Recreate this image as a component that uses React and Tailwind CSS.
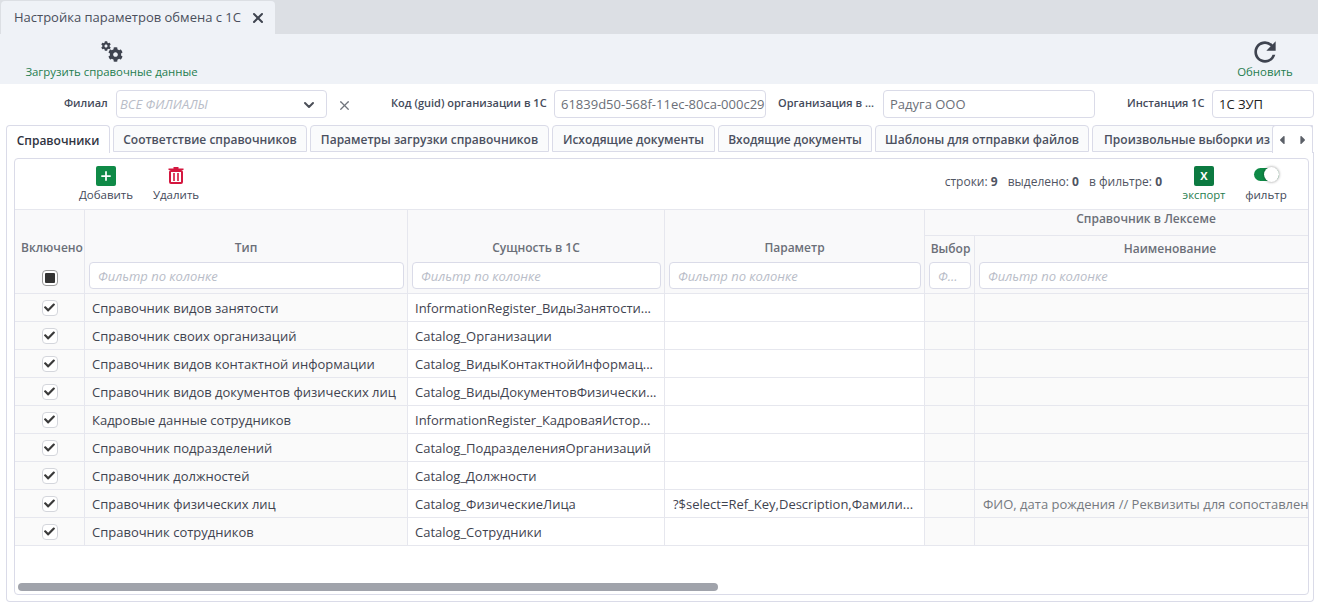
import React from "react";
import { X, ChevronDown, Plus } from "lucide-react";
import { MdRefresh } from "react-icons/md";
import { FaCog, FaCaretLeft, FaCaretRight, FaCheck } from "react-icons/fa";

const tabs = [
  ["Соответствие справочников", "w-[194px]"],
  ["Параметры загрузки справочников", "w-[239px]"],
  ["Исходящие документы", "w-[163px]"],
  ["Входящие документы", "w-[154px]"],
  ["Шаблоны для отправки файлов", "w-[214px]"],
];

const rows = [
  ["Справочник видов занятости", "InformationRegister_ВидыЗанятости...", "", ""],
  ["Справочник своих организаций", "Catalog_Организации", "", ""],
  ["Справочник видов контактной информации", "Catalog_ВидыКонтактнойИнформац...", "", ""],
  ["Справочник видов документов физических лиц", "Catalog_ВидыДокументовФизически...", "", ""],
  ["Кадровые данные сотрудников", "InformationRegister_КадроваяИстор...", "", ""],
  ["Справочник подразделений", "Catalog_ПодразделенияОрганизаций", "", ""],
  ["Справочник должностей", "Catalog_Должности", "", ""],
  ["Справочник физических лиц", "Catalog_ФизическиеЛица", "?$select=Ref_Key,Description,Фамили...", "ФИО, дата рождения // Реквизиты для сопоставления"],
  ["Справочник сотрудников", "Catalog_Сотрудники", "", ""],
];

function FilterInput({ text = "Фильтр по колонке", className = "" }) {
  return (
    <div className={`h-[27px] pt-[2px] bg-white border border-[#dadbe8] rounded-[4px] pl-2 flex items-center italic font-normal text-[13px] text-[#b9bdc8] overflow-hidden whitespace-nowrap ${className}`}>
      {text}
    </div>
  );
}

function Check() {
  return (
    <div className="w-[16px] h-[16px] mx-auto bg-white border border-[#d4d6dc] rounded-[4px] flex items-center justify-center text-[#3a3a3a]">
      <FaCheck size={11} />
    </div>
  );
}

const cellBase = "border-r border-[#e6e7ee] bg-[#f9f9fa] text-center p-0";
const th = `${cellBase} border-b font-semibold text-[12px] text-[#6b6f78]`;
const thTall = `${cellBase} font-semibold text-[12px] text-[#6b6f78] align-bottom pb-[5px]`;

function TrashIcon() {
  return (
    <svg width="16" height="18" viewBox="0 0 16 18" className="text-[#d4173f]">
      <path d="M5.5 1h5v1.5h5V4H.5V2.500h5z" fill="currentColor" />
      <rect x="2" y="5" width="12" height="12" rx="1" fill="none" stroke="currentColor" strokeWidth="2" />
      <rect x="5.2" y="7" width="1.600" height="8" fill="currentColor" />
      <rect x="9.2" y="7" width="1.600" height="8" fill="currentColor" />
    </svg>
  );
}

export default function App() {
  return (
    <div className="w-[1318px] h-[607px] overflow-hidden bg-white text-[#3c4152] text-[13px] flex flex-col" style={{ fontFamily: '"Open Sans", "Noto Sans", sans-serif' }}>
      {/* window tab strip */}
      <div className="h-[34px] bg-[#dcdfe4] flex items-end shrink-0">
        <div className="w-[274px] h-[33px] ml-px bg-[#eff2f7] rounded-t-[4px] flex items-center pl-[13px] text-[13px] text-[#4a4f5c] whitespace-nowrap">
          <span>Настройка параметров обмена с 1С</span>
          <X size={16} strokeWidth={3} className="ml-[9px] shrink-0 text-[#3f4450]" />
        </div>
      </div>

      {/* toolbar */}
      <div className="h-[50px] bg-[#eff2f7] flex justify-between items-start shrink-0 font-medium text-[11.4px] text-[#1f7d4f]">
        <div className="ml-[25px] w-[173px] flex flex-col items-center">
          <div className="relative w-[22px] h-[21px] mt-[7px] text-[#3f4450]">
            <FaCog size={10} className="absolute left-0 top-0" />
            <FaCog size={15} className="absolute right-0 bottom-0" />
          </div>
          <span className="mt-[1px] whitespace-nowrap">Загрузить справочные данные</span>
        </div>
        <div className="mr-[25px] w-[56px] flex flex-col items-center">
          <MdRefresh size={32} className="mt-[2px] -mb-[6px] text-[#3f4450]" />
          <span className="mt-[1px]">Обновить</span>
        </div>
      </div>

      {/* filter row */}
      <div className="h-[41px] flex items-start pt-[6px] text-[11px] font-semibold text-[#444a5a] shrink-0">
        <span className="ml-[64px] w-[44px] h-[28px] leading-[26px]">Филиал</span>
        <div className="ml-[8px] w-[211px] h-[28px] border border-[#dadbe8] rounded-[4px] flex items-center justify-between pl-[3px] pr-[9px] pt-[1px] italic text-[13px] font-normal text-[#b9bdc8]">
          <span>ВСЕ ФИЛИАЛЫ</span>
          <ChevronDown size={16} strokeWidth={3} className="text-[#4b4f58]" />
        </div>
        <X size={15} strokeWidth={2} className="ml-[10px] mt-[8px] text-[#70747c]" />
        <span className="ml-[39px] w-[156px] leading-[26px] whitespace-nowrap">Код (guid) организации в 1С</span>
        <div className="ml-[7px] w-[212px] h-[28px] border border-[#dadbe8] rounded-[4px] px-[6px] pt-[1px] flex items-center text-[13px] font-normal text-[#6b6f78] overflow-hidden whitespace-nowrap">
          <span className="w-[204px] shrink-0 overflow-hidden">61839d50-568f-11ec-80ca-000c29</span>
        </div>
        <span className="ml-[12px] w-[96px] leading-[26px] whitespace-nowrap">Организация в ...</span>
        <div className="ml-[9px] w-[212px] h-[28px] border border-[#dadbe8] rounded-[4px] px-[6px] pt-[1px] flex items-center text-[13px] font-normal text-[#6b6f78]">Радуга ООО</div>
        <span className="ml-[32px] w-[78px] leading-[26px] whitespace-nowrap">Инстанция 1С</span>
        <div className="ml-[7px] w-[102px] h-[28px] border border-[#dadbe8] rounded-[4px] px-[6px] pt-[1px] flex items-center text-[13px] font-normal text-[#222]">1С ЗУП</div>
      </div>

      {/* tabs */}
      <div className="h-[27px] ml-[6px] w-[1307px] flex gap-[3px] text-[12px] font-semibold shrink-0 relative">
        <div className="w-[104px] h-[28px] pt-[3px] bg-white border border-b-0 border-[#dadbe8] rounded-t-[4px] flex items-center justify-center text-[#2f3340] z-10">Справочники</div>
        {tabs.map(([t, w]) => (
          <div key={t} className={`${w} h-[27px] pt-[2px] bg-[#fafbfc] border border-[#dadbe8] rounded-t-[4px] flex items-center justify-center text-[#4b5060] whitespace-nowrap`}>{t}</div>
        ))}
        <div className="flex-1 min-w-0 h-[27px] pt-[2px] bg-[#fafbfc] border border-[#dadbe8] rounded-tl-[4px] pl-[11px] flex items-center text-[#4b5060] whitespace-nowrap overflow-hidden">Произвольные выборки из</div>
        <div className="absolute right-0 top-0 w-[41px] h-[28px] bg-white border border-b-0 border-[#dadbe8] rounded-t-[4px] flex items-center justify-between px-[2px] text-[#5c6068] z-10">
          <FaCaretLeft size={14} />
          <FaCaretRight size={14} />
        </div>
      </div>

      {/* tab content */}
      <div className="ml-[6px] w-[1308px] h-[450px] shrink-0 border-x border-b border-[#dadbe8] rounded-b-[4px] pt-[6px] pl-[7px] pr-[4px] pb-[6px] flex">
        <div className="relative w-full bg-white border border-[#dadbe8] rounded-[4px] overflow-hidden flex flex-col">
          {/* grid toolbar */}
          <div className="h-[50px] shrink-0 flex items-start text-[11.500px] font-medium text-[#444a5a]">
            <div className="ml-[64px] w-[54px] flex flex-col items-center">
              <div className="mt-[7px] w-[20px] h-[20px] bg-[#0f8a47] rounded-[2px] flex items-center justify-center text-white">
                <Plus size={14} strokeWidth={3} />
              </div>
              <span>Добавить</span>
            </div>
            <div className="ml-[20px] w-[46px] flex flex-col items-center">
              <div className="mt-[6px] h-[20px] flex items-center"><TrashIcon /></div>
              <span className="mt-[1px]">Удалить</span>
            </div>
            <div className="ml-auto flex items-center mt-[14px] gap-[10px] text-[12px] font-normal text-[#4f5462] whitespace-nowrap">
              <span>строки: <b className="font-bold">9</b></span>
              <span>выделено: <b className="font-bold">0</b></span>
              <span>в фильтре: <b className="font-bold">0</b></span>
            </div>
            <div className="ml-[20px] w-[44px] flex flex-col items-center">
              <div className="mt-[7px] w-[20px] h-[20px] bg-[#0c7a41] rounded-[2px] flex items-center justify-center text-white text-[11px] font-bold">X</div>
              <span className="mt-[1px] text-[11.3px] text-[#1f7d4f]">экспорт</span>
            </div>
            <div className="ml-[18px] mr-[20px] w-[44px] flex flex-col items-center">
              <div className="mt-[9px] relative w-[25px] h-[13px] rounded-full bg-[#0f8a47]">
                <div className="absolute right-0 -top-[1px] w-[15px] h-[15px] bg-white rounded-full shadow-[0_0_3px_rgba(0,0,0,0.45)]"></div>
              </div>
              <span className="mt-[5px] text-[11.6px] whitespace-nowrap">фильтр</span>
            </div>
          </div>

          {/* table */}
          <div className="overflow-hidden">
            <table className="table-fixed border-separate border-spacing-0 w-[1720px] border-t border-[#e6e7ee]">
              <colgroup>
                <col className="w-[70px]" />
                <col className="w-[323px]" />
                <col className="w-[257px]" />
                <col className="w-[260px]" />
                <col className="w-[50px]" />
                <col className="w-[760px]" />
              </colgroup>
              <thead>
                <tr className="h-[26px]">
                  <th rowSpan={2} className={`${thTall} pl-[5px] whitespace-nowrap`}>Включено</th>
                  <th rowSpan={2} className={thTall}>Тип</th>
                  <th rowSpan={2} className={thTall}>Сущность в 1С</th>
                  <th rowSpan={2} className={thTall}>Параметр</th>
                  <th colSpan={2} className={`${th} pb-[8px] leading-[16px]`}>
                    <div className="w-[442px] text-center">Справочник в Лексеме</div>
                  </th>
                </tr>
                <tr className="h-[26px]">
                  <th className={`${cellBase} pl-[2px] font-semibold text-[12px] text-[#6b6f78]`}>Выбор</th>
                  <th className={`${cellBase} font-semibold text-[12px] text-[#6b6f78]`}><div className="w-[390px] text-center">Наименование</div></th>
                </tr>
                <tr className="h-[32px]">
                  <th className={`${th} align-top pt-[8px]`}>
                    <div className="w-[16px] h-[16px] mx-auto bg-white border border-[#9a9a9a] rounded-[4px] flex items-center justify-center">
                      <div className="w-[10px] h-[10px] bg-[#333] rounded-[1px]"></div>
                    </div>
                  </th>
                  {[0, 1, 2].map((i) => (
                    <th key={i} className={`${th} align-top pl-[4px] pr-[3px]`}><FilterInput /></th>
                  ))}
                  <th className={`${th} align-top pl-[4px] pr-[3px]`}><FilterInput text="Ф..." /></th>
                  <th className={`${th} align-top pl-[4px]`}><FilterInput className="rounded-r-none" /></th>
                </tr>
              </thead>
              <tbody>
                {rows.map((r, i) => (
                  <tr key={i} className="h-[28px] text-[13px] text-[#3f4350]">
                    <td className="border-r border-b border-[#e6e7ee] bg-[#fafafa] p-0"><Check /></td>
                    <td className="border-r border-b border-[#e6e7ee] bg-[#fafafa] pl-[7px] pt-[2px] whitespace-nowrap overflow-hidden">{r[0]}</td>
                    <td className="border-r border-b border-[#e6e7ee] pl-[7px] pt-[2px] whitespace-nowrap overflow-hidden">{r[1]}</td>
                    <td className="border-r border-b border-[#e6e7ee] pl-[8px] pt-[2px] whitespace-nowrap overflow-hidden">{r[2]}</td>
                    <td className="border-r border-b border-[#e6e7ee] bg-[#fafafa] p-0"></td>
                    <td className="border-b border-[#e6e7ee] bg-[#fafafa] pl-[8px] pt-[2px] whitespace-nowrap overflow-hidden text-[#75797f]">{r[3]}</td>
                  </tr>
                ))}
              </tbody>
            </table>
          </div>

          {/* horizontal scrollbar overlay */}
          <div className="absolute left-[3px] bottom-[3px] w-[700px] h-[8px] rounded-full bg-[#a0a3ab]"></div>
        </div>
      </div>
    </div>
  );
}
